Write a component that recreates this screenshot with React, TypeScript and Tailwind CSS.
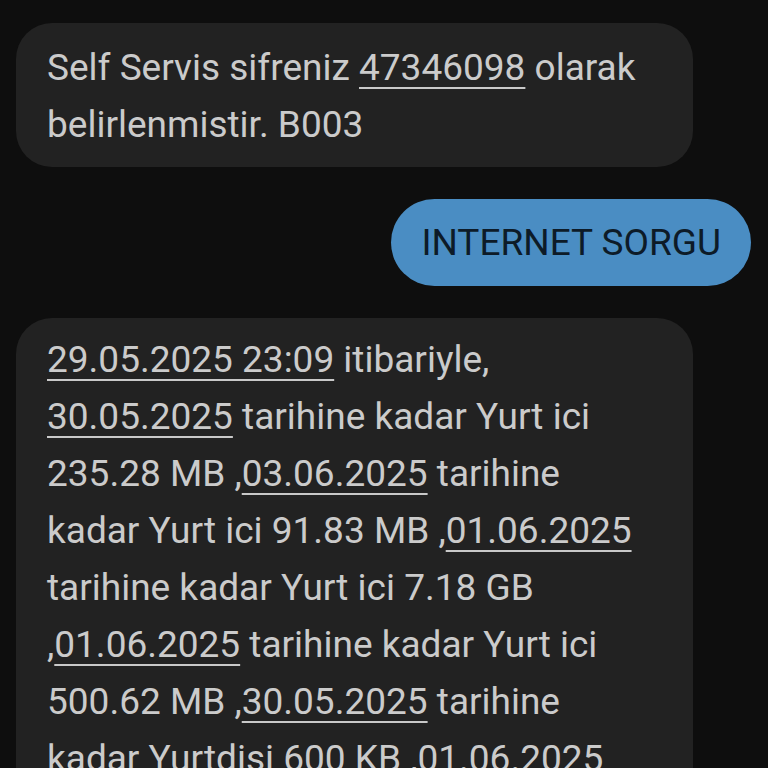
import React from "react";

const U = ({ children }: { children: React.ReactNode }) => (
  <span className="underline decoration-2 underline-offset-[7px] decoration-[#c9c9c9]">{children}</span>
);

export default function App() {
  return (
    <div
      className="w-[768px] h-[768px] overflow-hidden bg-[#0e0e0e] text-[#cbcbcb] flex flex-col pt-[23px]"
      style={{ fontFamily: "Roboto, 'Noto Sans', sans-serif" }}
    >
      <div className="shrink-0 ml-[16px] w-[677px] rounded-[36px] bg-[#222222] pl-[31px] pr-[20px] pt-[16px] pb-[14px] text-[37px] leading-[57px]">
        Self Servis sifreniz <U>47346098</U> olarak belirlenmistir. B003
      </div>
      <div className="shrink-0 mt-[32px] self-end mr-[17px] rounded-[44px] bg-[#4a8dc3] h-[87px] px-[30px] flex items-center text-[37px] text-[#0d1b28] whitespace-nowrap">
        INTERNET SORGU
      </div>
      <div className="shrink-0 mt-[32px] ml-[16px] w-[677px] rounded-t-[36px] bg-[#222222] pl-[31px] pr-[10px] pt-[13px] pb-[20px] text-[37px] leading-[57px] whitespace-nowrap">
        <U>29.05.2025 23:09</U> itibariyle,
        <br />
        <U>30.05.2025</U> tarihine kadar Yurt ici
        <br />
        235.28 MB ,<U>03.06.2025</U> tarihine
        <br />
        kadar Yurt ici 91.83 MB ,<U>01.06.2025</U>
        <br />
        tarihine kadar Yurt ici 7.18 GB
        <br />,<U>01.06.2025</U> tarihine kadar Yurt ici
        <br />
        500.62 MB ,<U>30.05.2025</U> tarihine
        <br />
        kadar Yurtdisi 600 KB ,<U>01.06.2025</U>
      </div>
    </div>
  );
}
